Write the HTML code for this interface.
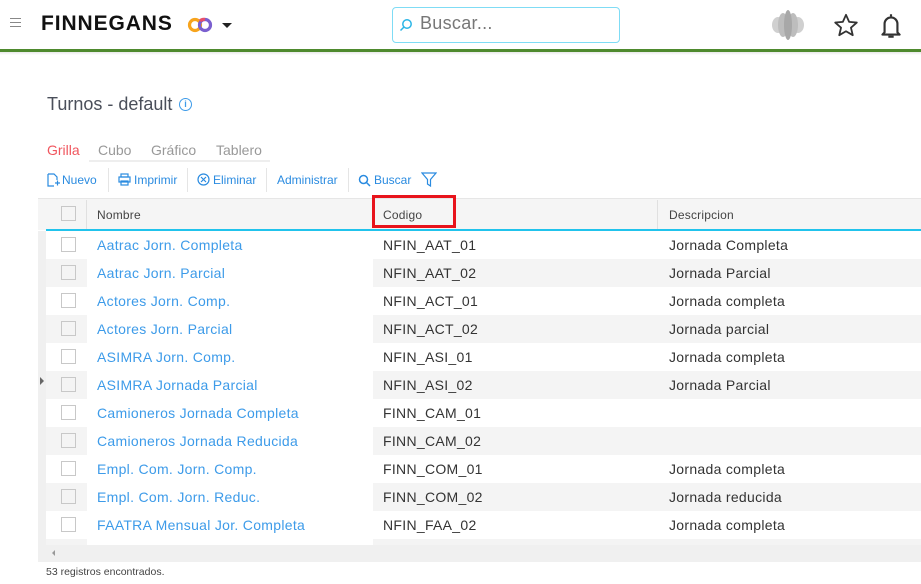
<!DOCTYPE html>
<html><head><meta charset="utf-8"><style>
*{margin:0;padding:0;box-sizing:border-box}
body{width:921px;height:584px;overflow:hidden;background:#fff;font-family:"Liberation Sans",sans-serif;position:relative}
.a{position:absolute}
.row{position:absolute;left:38px;width:883px;height:28px}
.row .g{position:absolute;left:0;top:0;width:8px;height:28px;background:#f0f0f0}
.row .c1{position:absolute;left:8px;top:0;width:41px;height:28px}
.row .c3{position:absolute;left:335px;top:0;width:548px;height:28px}
.s .c1,.s .c3{background:#f4f4f4}
.cb{position:absolute;left:23px;top:6px;width:15px;height:15px;border:1px solid #c8c8c8;background:#fff}
.s .cb{background:#f4f4f4}
.n,.k,.d{position:absolute;top:6px;font-size:14px;letter-spacing:0.3px}
.n{left:59px;color:#3d9be9}
.k{left:345px;color:#333}
.d{left:631px;color:#333}
.tb{position:absolute;top:173px;font-size:12px;color:#2a8be0}
.th{position:absolute;top:208px;font-size:12px;color:#444;letter-spacing:0.2px}
</style></head><body>
<!-- header -->
<div class="a" style="left:10px;top:18px;width:11px;height:1px;background:#888"></div>
<div class="a" style="left:10px;top:22px;width:11px;height:1px;background:#888"></div>
<div class="a" style="left:10px;top:26px;width:11px;height:1px;background:#888"></div>
<div class="a" style="left:41px;top:12px;font-size:21px;font-weight:bold;color:#111;letter-spacing:0.9px">FINNEGANS</div>
<svg class="a" style="left:186px;top:16px" width="28" height="18" viewBox="0 0 28 18"><circle cx="9" cy="9" r="5.5" fill="none" stroke="#f7a41d" stroke-width="3.2"/><circle cx="19" cy="9" r="5.5" fill="none" stroke="#7a5fcf" stroke-width="3.2"/><path d="M14 5 A5.5 5.5 0 0 1 19 3.5" stroke="#e8506a" stroke-width="3.2" fill="none"/></svg>
<div class="a" style="left:222px;top:23px;border-left:5px solid transparent;border-right:5px solid transparent;border-top:5px solid #222"></div>
<div class="a" style="left:392px;top:7px;width:228px;height:36px;border:1px solid #7fdcf5;border-radius:4px"></div>
<svg class="a" style="left:399px;top:18px" width="14" height="14" viewBox="0 0 14 14"><circle cx="8" cy="6" r="4.2" fill="none" stroke="#2ab5e6" stroke-width="1.5"/><path d="M5 9 L1.5 12.5" stroke="#2ab5e6" stroke-width="1.5"/></svg>
<div class="a" style="left:420px;top:13px;font-size:18px;color:#777;letter-spacing:0.3px">Buscar...</div>
<svg class="a" style="left:770px;top:8px" width="36" height="34" viewBox="0 0 36 34"><ellipse cx="8" cy="17" rx="6" ry="8" fill="#d0d0d0"/><ellipse cx="28" cy="17" rx="6" ry="8" fill="#d0d0d0"/><ellipse cx="13" cy="17" rx="5" ry="12" fill="#bdbdbd"/><ellipse cx="23" cy="17" rx="5" ry="12" fill="#bdbdbd"/><ellipse cx="18" cy="17" rx="4" ry="15" fill="#a8a8a8"/></svg>
<svg class="a" style="left:832px;top:12px" width="28" height="27" viewBox="0 0 24 24"><path d="M12 2.5l2.8 6.3 6.8.6-5.2 4.5 1.6 6.7L12 17.1l-6 3.5 1.6-6.7-5.2-4.5 6.8-.6z" fill="none" stroke="#333" stroke-width="1.6" stroke-linejoin="round"/></svg>
<svg class="a" style="left:878px;top:11px" width="26" height="30" viewBox="0 0 24 28"><path d="M12 3v2M6 20V12a6 6 0 0 1 12 0v8l2 2H4z" fill="none" stroke="#333" stroke-width="2" stroke-linejoin="round"/><path d="M9.5 24h5" stroke="#333" stroke-width="2"/></svg>
<div class="a" style="left:0;top:49px;width:921px;height:3px;background:#4e8a2e"></div>
<div class="a" style="left:0;top:52px;width:921px;height:3px;background:linear-gradient(#e8e8e8,#fff)"></div>
<!-- title -->
<div class="a" style="left:47px;top:94px;font-size:18px;color:#4a4f5a">Turnos - default</div>
<div class="a" style="left:179px;top:98px;width:13px;height:13px;border:1.3px solid #3d9be9;border-radius:50%;font-size:9px;color:#3d9be9;text-align:center;line-height:11px;font-weight:bold">i</div>
<!-- tabs -->
<div class="a" style="left:47px;top:142px;font-size:14px;color:#f0565e">Grilla</div>
<div class="a" style="left:98px;top:142px;font-size:14px;color:#999">Cubo</div>
<div class="a" style="left:151px;top:142px;font-size:14px;color:#999">Gráfico</div>
<div class="a" style="left:216px;top:142px;font-size:14px;color:#999">Tablero</div>
<div class="a" style="left:89px;top:160px;width:181px;height:2px;background:#eee"></div>
<!-- toolbar -->
<svg class="a" style="left:47px;top:173px" width="13" height="14" viewBox="0 0 13 14"><path d="M1 1h6l3 3v3M1 1v12h6M8 10h5M10.5 7.5v5" fill="none" stroke="#2a8be0" stroke-width="1.2"/></svg>
<div class="tb" style="left:62px">Nuevo</div>
<div class="a" style="left:108px;top:168px;width:1px;height:24px;background:#e5e5e5"></div>
<svg class="a" style="left:118px;top:173px" width="13" height="13" viewBox="0 0 13 13"><rect x="3" y="1" width="7" height="3" fill="none" stroke="#2a8be0" stroke-width="1.2"/><rect x="1" y="4" width="11" height="5" fill="none" stroke="#2a8be0" stroke-width="1.2"/><rect x="3" y="8" width="7" height="4" fill="none" stroke="#2a8be0" stroke-width="1.2"/></svg>
<div class="tb" style="left:134px">Imprimir</div>
<div class="a" style="left:187px;top:168px;width:1px;height:24px;background:#e5e5e5"></div>
<svg class="a" style="left:197px;top:173px" width="13" height="13" viewBox="0 0 13 13"><circle cx="6.5" cy="6.5" r="5.5" fill="none" stroke="#2a8be0" stroke-width="1.2"/><path d="M4 4l5 5M9 4l-5 5" stroke="#2a8be0" stroke-width="1.2"/></svg>
<div class="tb" style="left:213px">Eliminar</div>
<div class="a" style="left:266px;top:168px;width:1px;height:24px;background:#e5e5e5"></div>
<div class="tb" style="left:277px">Administrar</div>
<div class="a" style="left:348px;top:168px;width:1px;height:24px;background:#e5e5e5"></div>
<svg class="a" style="left:358px;top:174px" width="13" height="13" viewBox="0 0 13 13"><circle cx="5.5" cy="5.5" r="4" fill="none" stroke="#2a8be0" stroke-width="1.5"/><path d="M8.5 8.5L12 12" stroke="#2a8be0" stroke-width="1.5"/></svg>
<div class="tb" style="left:374px">Buscar</div>
<svg class="a" style="left:421px;top:172px" width="16" height="15" viewBox="0 0 16 15"><path d="M1 1h14L9.5 7.5V14L6.5 12V7.5z" fill="none" stroke="#2a8be0" stroke-width="1.2"/></svg>
<!-- grid -->
<div class="a" style="left:38px;top:198px;width:883px;height:32px;background:#f5f5f5;border-top:1px solid #e6e6e6"></div>
<div class="a" style="left:46px;top:229px;width:875px;height:2px;background:#21c3ec"></div>
<div class="a" style="left:61px;top:206px;width:15px;height:15px;border:1px solid #c8c8c8;background:#f5f5f5"></div>
<div class="a" style="left:86px;top:200px;width:1px;height:29px;background:#e0e0e0"></div>
<div class="th" style="left:97px">Nombre</div>
<div class="a" style="left:657px;top:200px;width:1px;height:29px;background:#e0e0e0"></div>
<div class="th" style="left:383px">Codigo</div>
<div class="a" style="left:372px;top:195px;width:84px;height:33px;border:3px solid #e8141c"></div>
<div class="th" style="left:669px">Descripcion</div>

<div class="row" style="top:231px"><div class="g"></div><div class="c1"></div><div class="c3"></div><div class="cb"></div><div class="n">Aatrac Jorn. Completa</div><div class="k">NFIN_AAT_01</div><div class="d">Jornada Completa</div></div>
<div class="row s" style="top:259px"><div class="g"></div><div class="c1"></div><div class="c3"></div><div class="cb"></div><div class="n">Aatrac Jorn. Parcial</div><div class="k">NFIN_AAT_02</div><div class="d">Jornada Parcial</div></div>
<div class="row" style="top:287px"><div class="g"></div><div class="c1"></div><div class="c3"></div><div class="cb"></div><div class="n">Actores Jorn. Comp.</div><div class="k">NFIN_ACT_01</div><div class="d">Jornada completa</div></div>
<div class="row s" style="top:315px"><div class="g"></div><div class="c1"></div><div class="c3"></div><div class="cb"></div><div class="n">Actores Jorn. Parcial</div><div class="k">NFIN_ACT_02</div><div class="d">Jornada parcial</div></div>
<div class="row" style="top:343px"><div class="g"></div><div class="c1"></div><div class="c3"></div><div class="cb"></div><div class="n">ASIMRA Jorn. Comp.</div><div class="k">NFIN_ASI_01</div><div class="d">Jornada completa</div></div>
<div class="row s" style="top:371px"><div class="g"></div><div class="c1"></div><div class="c3"></div><div class="cb"></div><div class="n">ASIMRA Jornada Parcial</div><div class="k">NFIN_ASI_02</div><div class="d">Jornada Parcial</div></div>
<div class="row" style="top:399px"><div class="g"></div><div class="c1"></div><div class="c3"></div><div class="cb"></div><div class="n">Camioneros Jornada Completa</div><div class="k">FINN_CAM_01</div></div>
<div class="row s" style="top:427px"><div class="g"></div><div class="c1"></div><div class="c3"></div><div class="cb"></div><div class="n">Camioneros Jornada Reducida</div><div class="k">FINN_CAM_02</div></div>
<div class="row" style="top:455px"><div class="g"></div><div class="c1"></div><div class="c3"></div><div class="cb"></div><div class="n">Empl. Com. Jorn. Comp.</div><div class="k">FINN_COM_01</div><div class="d">Jornada completa</div></div>
<div class="row s" style="top:483px"><div class="g"></div><div class="c1"></div><div class="c3"></div><div class="cb"></div><div class="n">Empl. Com. Jorn. Reduc.</div><div class="k">FINN_COM_02</div><div class="d">Jornada reducida</div></div>
<div class="row" style="top:511px"><div class="g"></div><div class="c1"></div><div class="c3"></div><div class="cb"></div><div class="n">FAATRA Mensual Jor. Completa</div><div class="k">NFIN_FAA_02</div><div class="d">Jornada completa</div></div>
<div class="row s" style="top:539px;height:7px;overflow:hidden"><div class="g"></div><div class="c1"></div><div class="c3"></div><div class="cb"></div></div>
<div class="a" style="left:40px;top:377px;border-top:4px solid transparent;border-bottom:4px solid transparent;border-left:4px solid #666"></div>
<div class="a" style="left:38px;top:545px;width:883px;height:17px;background:#f0f0f0"></div>
<div class="a" style="left:52px;top:550px;border-top:3px solid transparent;border-bottom:3px solid transparent;border-right:3px solid #999"></div>
<div class="a" style="left:46px;top:566px;font-size:10.5px;color:#444">53 registros encontrados.</div>
</body></html>
